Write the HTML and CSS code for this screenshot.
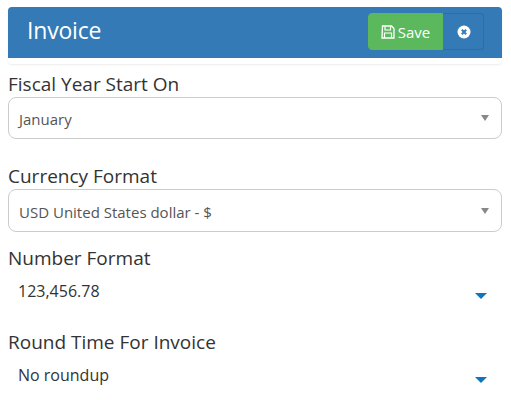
FILE: index.html
```html
<!DOCTYPE html>
<html lang="en">
<head>
    <meta charset="UTF-8">
    <title>Invoice</title>
    <link rel="stylesheet" href="styles.css">
</head>
<body>
    <div class="panel">
        <div class="panel-heading">
            <h1>Invoice</h1>
            <div class="btn-group">
                <button class="btn btn-save">
                    <svg class="icon" viewBox="0 0 14 14" width="14" height="14">
                        <path d="M1.5 1h9l2.5 2.5v9.5h-12z" fill="none" stroke="currentColor" stroke-width="1.3"/>
                        <path d="M4 1.5v3.5h5.5v-3.5M3.5 13v-5h7v5" fill="none" stroke="currentColor" stroke-width="1.2"/>
                    </svg>
                    Save
                </button>
                <button class="btn btn-close">
                    <svg class="icon" viewBox="0 0 14 14" width="14" height="14">
                        <circle cx="7" cy="7" r="6.5" fill="#fff"/>
                        <path d="M4.8 4.8l4.4 4.4M9.2 4.8l-4.4 4.4" stroke="#337ab7" stroke-width="2"/>
                    </svg>
                </button>
            </div>
        </div>
    </div>

    <div class="field">
        <label>Fiscal Year Start On</label>
        <div class="select"><span class="select-text">January</span><i class="caret"></i></div>
    </div>
    <div class="field field-wide">
        <label>Currency Format</label>
        <div class="select select-tall"><span class="select-text">USD United States dollar - $</span><i class="caret"></i></div>
    </div>
    <div class="field field-plain">
        <label>Number Format</label>
        <div class="plain-select"><span>123,456.78</span><i class="caret caret-blue"></i></div>
    </div>
    <div class="field field-plain">
        <label>Round Time For Invoice</label>
        <div class="plain-select"><span>No roundup</span><i class="caret caret-blue"></i></div>
    </div>
</body>
</html>
```

FILE: styles.css
```css
body {
    margin: 0;
    padding: 7px 9px 0 8px;
    font-family: "Open Sans", sans-serif;
    color: #333;
    background: #fff;
    overflow: hidden;
}

.panel {
    height: 57px;
    border-radius: 4px;
    box-shadow: 0 1px 2px rgba(0, 0, 0, 0.08);
    margin-bottom: 8px;
}

.panel-heading {
    display: flex;
    align-items: flex-start;
    justify-content: space-between;
    height: 51px;
    padding: 0 18px 0 19px;
    background: #337ab7;
    border-radius: 4px 4px 0 0;
    color: #fff;
}

h1 {
    margin: 7px 0 0;
    font-size: 23px;
    line-height: 32px;
    font-weight: 400;
    letter-spacing: -0.2px;
}

.btn-group {
    display: flex;
    margin-top: 6px;
}

.btn {
    display: flex;
    align-items: center;
    justify-content: center;
    height: 37px;
    padding: 0;
    font-family: inherit;
    font-size: 15px;
    color: #fff;
    border: 1px solid;
}

.btn-save {
    width: 75px;
    gap: 3px;
    background: #5cb85c;
    border-color: #5cb85c;
    border-radius: 4px 0 0 4px;
}

.btn-close {
    width: 41px;
    padding-left: 2px;
    background: #337ab7;
    border-color: #2e6da4;
    border-left: 0;
    border-radius: 0 4px 4px 0;
}

.field {
    margin-bottom: 10px;
}

.field-wide {
    margin-top: 25px;
    margin-bottom: 14px;
}

.field-plain {
    margin-bottom: 13px;
}

label {
    display: block;
    font-size: 19px;
    line-height: 25px;
    color: #333;
}

.select {
    display: flex;
    align-items: center;
    justify-content: space-between;
    height: 40px;
    padding: 0 12px 0 10px;
    border: 1px solid #ccc;
    border-radius: 8px;
    font-size: 15px;
    color: #555;
}

.select-text {
    margin-top: 2px;
}

.select-tall {
    height: 41px;
}

.plain-select {
    display: flex;
    align-items: center;
    justify-content: space-between;
    height: 46px;
    padding: 0 15px 6px 10px;
    box-sizing: border-box;
    font-size: 16px;
    color: #333;
}

.caret {
    width: 0;
    height: 0;
    border-left: 4px solid transparent;
    border-right: 4px solid transparent;
    border-top: 6px solid #888;
}

.caret-blue {
    margin-top: 10px;
    border-left-width: 6px;
    border-right-width: 6px;
    border-top-color: #0f75bc;
}
```
